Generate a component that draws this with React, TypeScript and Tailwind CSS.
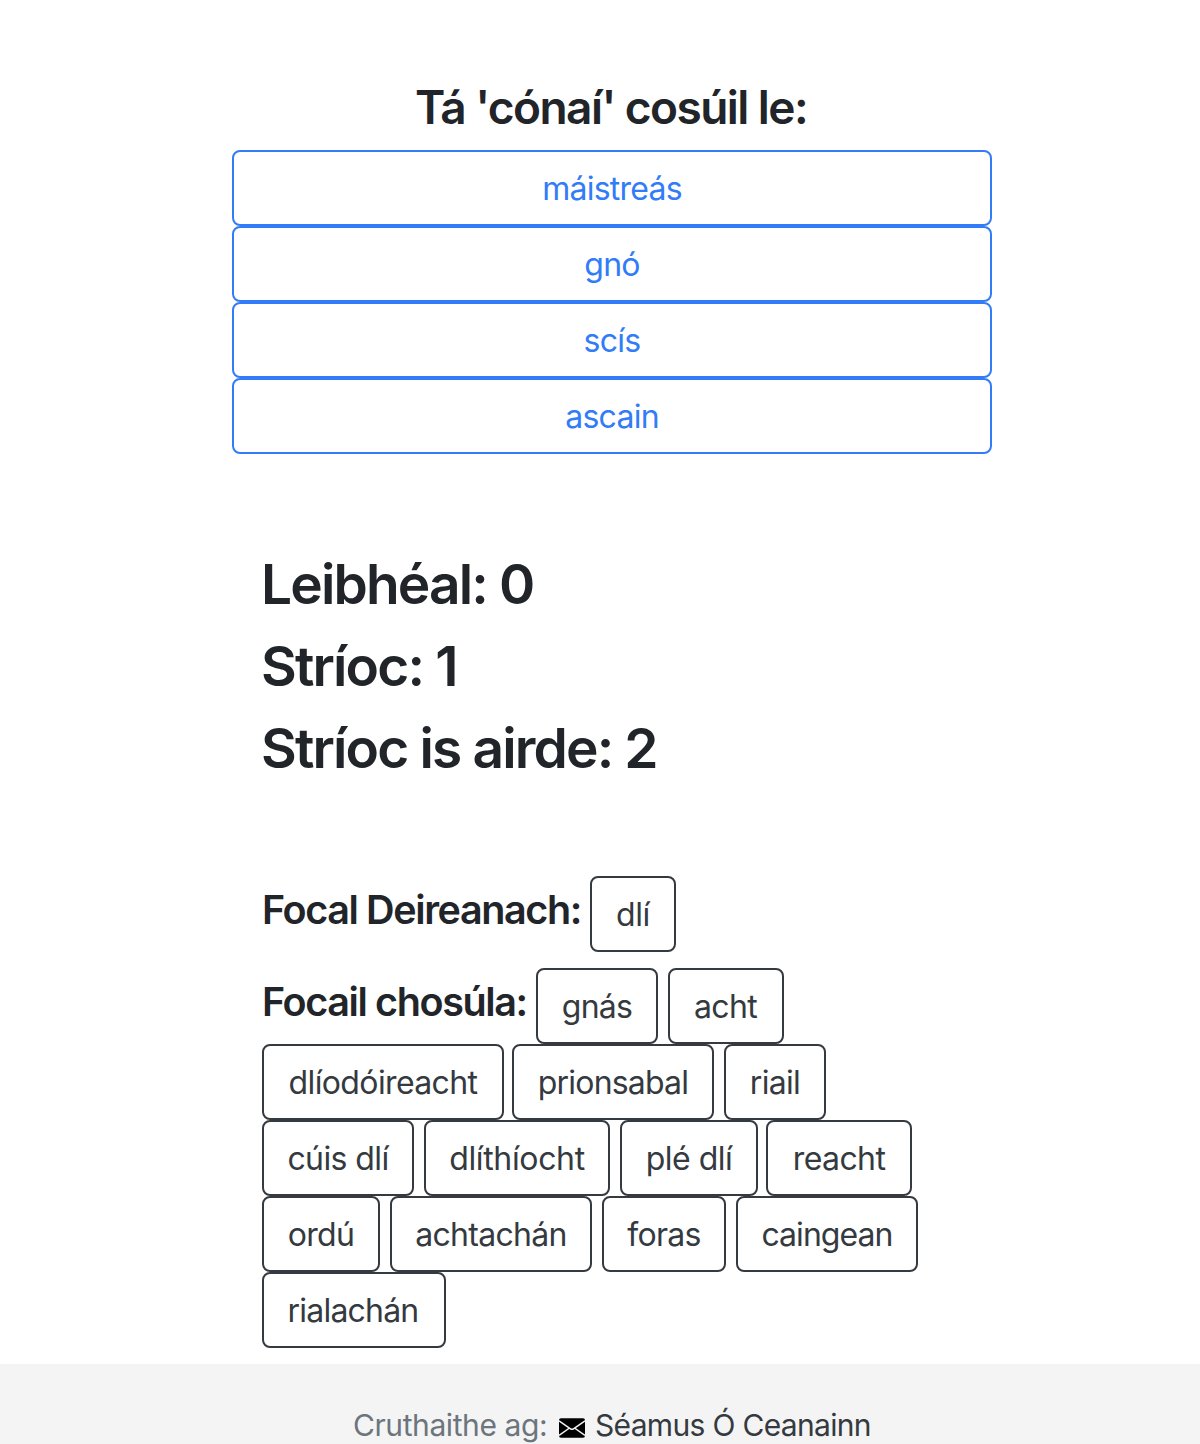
import React from "react";

const options = ["máistreás", "gnó", "scís", "ascain"];

const rows: { text: string; cls: string }[][] = [
  [
    { text: "dlíodóireacht", cls: "w-[242px] mr-[8px] tracking-[-0.62px]" },
    { text: "prionsabal", cls: "w-[202px] mr-[10px] tracking-[-0.8px]" },
    { text: "riail", cls: "w-[102px] tracking-[-0.7px]" },
  ],
  [
    { text: "cúis dlí", cls: "w-[152px] mr-[10px] tracking-[-0.6px]" },
    { text: "dlíthíocht", cls: "w-[186px] mr-[10px] tracking-[-0.35px]" },
    { text: "plé dlí", cls: "w-[138px] mr-[8px] tracking-[-0.5px]" },
    { text: "reacht", cls: "w-[146px] tracking-[-0.6px]" },
  ],
  [
    { text: "ordú", cls: "w-[118px] mr-[10px] tracking-[-0.7px]" },
    { text: "achtachán", cls: "w-[202px] mr-[10px] tracking-[-0.7px]" },
    { text: "foras", cls: "w-[124px] mr-[10px] tracking-[-0.7px]" },
    { text: "caingean", cls: "w-[182px] tracking-[-0.95px]" },
  ],
  [{ text: "rialachán", cls: "w-[184px] pr-[2px] tracking-[-0.8px]" }],
];

function Word({ text, cls }: { text: string; cls: string }) {
  return (
    <button
      className={`flex h-[76px] shrink-0 items-center justify-center whitespace-nowrap rounded-[8px] border-2 border-[#343a40] pt-[2px] text-[32px] leading-[48px] text-[#343a40] ${cls}`}
    >
      <span>{text}</span>
    </button>
  );
}

export default function App() {
  return (
    <div className="h-[1444px] overflow-hidden bg-white font-['Inter',sans-serif] text-[#212529]">
      <main className="ml-[232px] h-[1364px] w-[760px] pt-[80px]">
        <h3 className="h-[70px] whitespace-nowrap pr-[2px] text-center text-[46px] font-semibold leading-[55px] tracking-[-1.56px]">
          <span>Tá 'cónaí' cosúil le:</span>
        </h3>
        <div className="flex flex-col">
          {options.map((text) => (
            <button
              key={text}
              className="flex h-[76px] items-center justify-center rounded-[8px] border-2 border-[#327cf7] pt-[2px] text-[32px] leading-[48px] tracking-[-0.75px] text-[#327cf7]"
            >
              <span>{text}</span>
            </button>
          ))}
        </div>
        <section className="-mb-px ml-[29px] mt-[97px] flex flex-col gap-[16px] whitespace-nowrap text-[55px] font-semibold leading-[66px] tracking-[-1.84px]">
          <h2><span>Leibhéal: 0</span></h2>
          <h2><span>Stríoc: 1</span></h2>
          <h2><span>Stríoc is airde: 2</span></h2>
        </section>
        <section className="ml-[30px] mt-[96px]">
          <div className="mb-[16px] flex whitespace-nowrap">
            <h4 className="w-[328px] pt-[10px] text-[39.5px] font-semibold leading-[48px] tracking-[-1.38px]">
              <span>Focal Deireanach:</span>
            </h4>
            <Word text="dlí" cls="w-[86px] tracking-[-0.4px]" />
          </div>
          <div className="flex whitespace-nowrap">
            <h4 className="w-[274px] pt-[10px] text-[39.5px] font-semibold leading-[48px] tracking-[-1.38px]">
              <span>Focail chosúla:</span>
            </h4>
            <Word text="gnás" cls="w-[122px] mr-[10px] tracking-[-0.7px]" />
            <Word text="acht" cls="w-[116px] pr-px tracking-[-0.6px]" />
          </div>
          {rows.map((row) => (
            <div key={row[0].text} className="flex">
              {row.map((w) => (
                <Word key={w.text} {...w} />
              ))}
            </div>
          ))}
        </section>
      </main>
      <footer className="flex h-[80px] items-start whitespace-nowrap bg-[#f4f4f4] pl-[353px] pt-[37px] text-[30px] leading-[48px]">
        <span className="w-[206px] tracking-[-0.42px] text-[#6c757d]">Cruthaithe ag:</span>
        <svg className="mr-[10px] mt-[17px] h-[20px] w-[26px]" viewBox="0 0 26 20">
          <rect y="0.3" width="26" height="19.4" rx="2" fill="#000" />
          <path d="M0 2.8 11.5 10.8Q13 11.8 14.5 10.8L26 2.8M0 17.5 10.5 10M26 17.5 15.5 10" fill="none" stroke="#f4f4f4" strokeWidth="1.5" />
        </svg>
        <span className="tracking-[-0.68px] text-[#343a40]">Séamus Ó Ceanainn</span>
      </footer>
    </div>
  );
}
